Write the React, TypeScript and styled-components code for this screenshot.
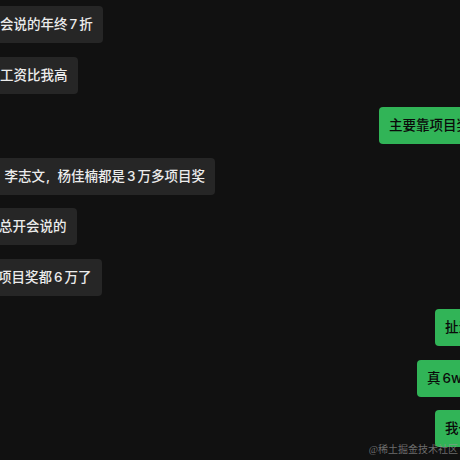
import styled, { createGlobalStyle } from "styled-components"

type Side = "left" | "right"

interface Message {
  id: number
  side: Side
  text: string
  bleed: number
}

const messages: Message[] = [
  { id: 1, side: "left", text: "会说的年终7折", bleed: 10 },
  { id: 2, side: "left", text: "工资比我高", bleed: 10 },
  { id: 3, side: "right", text: "主要靠项目奖金", bleed: 33.5 },
  { id: 4, side: "left", text: "李志文, 杨佳楠都是3万多项目奖", bleed: 5.5 },
  { id: 5, side: "left", text: "总开会说的", bleed: 11 },
  { id: 6, side: "left", text: "项目奖都6万了", bleed: 12 },
  { id: 7, side: "right", text: "扯淡吧", bleed: 35.5 },
  { id: 8, side: "right", text: "真6w啊", bleed: 27.7 },
  { id: 9, side: "right", text: "我也是", bleed: 35.5 },
]

// latin runs next to CJK get a little breathing room, like the native chat font
const splitRuns = (text: string) => text.split(/([0-9A-Za-z]+|, )/).filter(Boolean)

const GlobalStyle = createGlobalStyle`
  html, body {
    margin: 0;
    padding: 0;
    background: #111111;
  }
  body {
    width: 460px;
    height: 460px;
    overflow: hidden;
    font-family: "Inter", "Noto Sans CJK SC", sans-serif;
  }
`

const Screen = styled.div`
  position: relative;
  width: 460px;
  height: 460px;
  overflow: hidden;
  background: #111111;
`

const Thread = styled.div`
  display: flex;
  flex-direction: column;
  gap: 13.5px;
  padding-top: 6px;
`

const Row = styled.div<{ $side: Side }>`
  display: flex;
  justify-content: ${(p) => (p.$side === "left" ? "flex-start" : "flex-end")};
`

const Bubble = styled.div<{ $side: Side; $bleed: number }>`
  flex-shrink: 0;
  height: 37px;
  padding: 0 10px;
  border-radius: 4px;
  font-size: 13.5px;
  font-weight: 500;
  line-height: 37px;
  white-space: nowrap;
  color: ${(p) => (p.$side === "left" ? "#ececec" : "#0a0a0a")};
  background: ${(p) => (p.$side === "left" ? "#262626" : "#31b457")};
  margin-left: ${(p) => (p.$side === "left" ? `-${p.$bleed}px` : "0")};
  margin-right: ${(p) => (p.$side === "right" ? `-${p.$bleed}px` : "0")};
`

const Latin = styled.span<{ $wide?: boolean }>`
  padding: ${(p) => (p.$wide ? "0 4px 0 1px" : "0 2px")};
  white-space: pre;
`

const Watermark = styled.div`
  position: absolute;
  right: 2px;
  bottom: 4px;
  font-family: "Liberation Serif", "Noto Sans CJK SC", serif;
  font-size: 10px;
  line-height: 12px;
  color: rgba(150, 150, 150, 0.7);
`

const App = () => {
  return (
    <>
      <GlobalStyle />
      <Screen>
        <Thread>
          {messages.map((m) => (
            <Row key={m.id} $side={m.side}>
              <Bubble $side={m.side} $bleed={m.bleed}>
                {splitRuns(m.text).map((run, i) =>
                  /[0-9A-Za-z,]/.test(run) ? (
                    <Latin key={i} $wide={run === ", "}>
                      {run}
                    </Latin>
                  ) : (
                    run
                  )
                )}
              </Bubble>
            </Row>
          ))}
        </Thread>
        <Watermark>@稀土掘金技术社区</Watermark>
      </Screen>
    </>
  )
}

export default App
